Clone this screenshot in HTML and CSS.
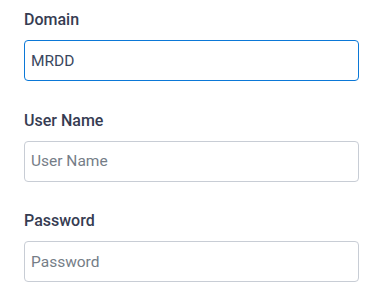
FILE: index.html
```html
<!DOCTYPE html>
<html lang="en">
<head>
  <meta charset="UTF-8">
  <meta name="viewport" content="width=device-width, initial-scale=1.0" />
  <title>Login</title>
  <link rel="stylesheet" href="styles.css">
</head>
<body>
  <div class="login-container">
    <form id="loginForm">
      <div class="form-group">
        <label for="domain">Domain</label>
        <input type="text" id="domain" name="domain" class="is-active" value="MRDD" />
      </div>
      <div class="form-group">
        <label for="username">User Name</label>
        <input type="text" id="username" name="username" placeholder="User Name" />
      </div>
      <div class="form-group">
        <label for="password">Password</label>
        <input type="password" id="password" name="password" placeholder="Password" />
      </div>
    </form>
  </div>
</body>
</html>
```

FILE: styles.css
```css
body {
  font-family: Roboto, 'Liberation Sans', sans-serif;
  background: #fff;
  margin: 0;
}

.login-container {
  padding: 9px 23px 0 24px;
}

.form-group {
  margin-bottom: 28.5px;
}

.form-group label {
  display: block;
  font-size: 16px;
  font-weight: 500;
  line-height: 22px;
  margin-bottom: 9px;
  color: #363c52;
}

.form-group input {
  display: block;
  box-sizing: border-box;
  width: 100%;
  height: 41px;
  padding: 0 6px;
  border: 1px solid #c8cdd5;
  border-radius: 4px;
  font-family: inherit;
  font-size: 15.5px;
  color: #3a4760;
  background: #fff;
  outline: none;
}

.form-group input::placeholder {
  color: #757d87;
}

.form-group input.is-active,
.form-group input:focus {
  border-color: #0b78d7;
}
```
